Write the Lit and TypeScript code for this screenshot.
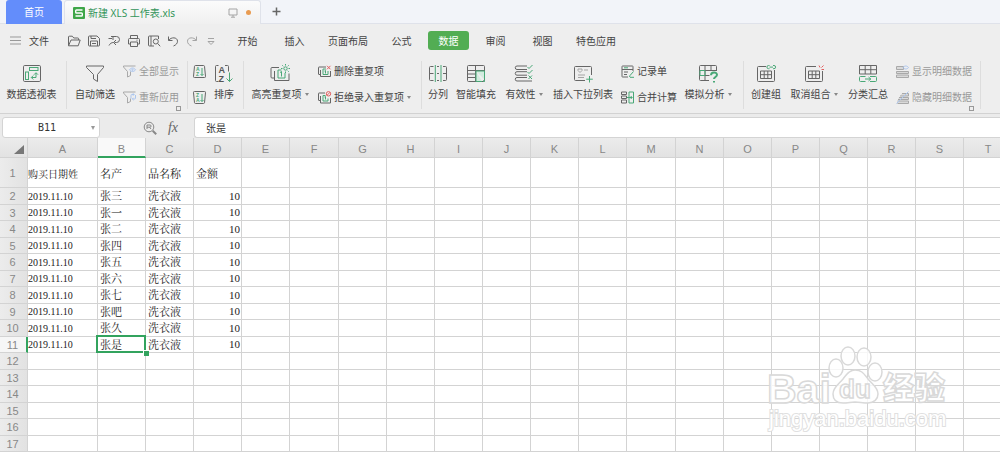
import { LitElement, html, svg, css, nothing, TemplateResult } from "lit";
import { customElement, state } from "lit/decorators.js";
import { classMap } from "lit/directives/class-map.js";

/* ---------- icons ---------- */

const big = (body: TemplateResult) => html`<svg class="big-icon" viewBox="0 0 22 20" aria-hidden="true">${body}</svg>`;
const small = (body: TemplateResult) => html`<svg class="small-icon" viewBox="0 0 13 13" aria-hidden="true">${body}</svg>`;
const quick = (body: TemplateResult) => html`<svg class="quick-icon" viewBox="0 0 14 14" aria-hidden="true">${body}</svg>`;

const icons = {
  pivot: big(svg`
    <rect x="2.5" y="2.5" width="17" height="16" rx="1.2"/>
    <g class="green"><rect x="8.5" y="4.5" width="8.5" height="3"/><rect x="4.5" y="9" width="3" height="7.5"/>
    <path d="M10.5 14.5h4.5v-4.5M12.3 12.5l-2 2 2 2M13 11.7l2-2 2 2"/></g>`),
  filter: big(svg`<path d="M2.5 3h17v1.5l-6 7v7l-4-2.5v-4.500l-7-7z"/>`),
  sort: big(svg`
    <path d="M5.500 2.500H3.500a1 1 0 0 0-1 1v14a1 1 0 0 0 1 1h2M12 2.500h2.500a1 1 0 0 1 1 1v5"/>
    <text class="glyph" x="5.500" y="10">A</text><text class="glyph" x="5.500" y="18.500">Z</text>
    <path class="green" d="M16.500 9.500v9M13.500 15.500l3 3 3-3"/>`),
  highlight: big(svg`
    <path d="M10 4.500H3a1 1 0 0 0-1 1v8.500a1 1 0 0 0 1 1h2.500M5.500 8v9.500h14.500v-7"/>
    <g class="green"><path d="M12.500 7H9v8h7v-5M11 9.500l1.500-1v5"/><circle cx="16.500" cy="5.500" r="1.700"/>
    <path d="M16.500 1v1.500M16.500 8.500v1.500M12 5.500h1.500M19.500 5.500H21M13.300 2.300l1 1M19.700 2.300l-1 1M19.700 8.700l-1-1"/></g>`),
  split: big(svg`
    <path d="M6.500 3.500h-3a1 1 0 0 0-1 1v12a1 1 0 0 0 1 1h3M10 3.500h2M10 17.500h2M16 3.500h2.500a1 1 0 0 1 1 1v12a1 1 0 0 1-1 1H16M2.500 10.500h4M10 10.500h2M16 10.500h3.500"/>
    <path class="green" d="M8.300 2v17M14 2v17"/>`),
  fill: big(svg`
    <rect x="2.500" y="2.500" width="17" height="16" rx="1"/><path d="M2.500 7.500h17M2.500 11h8M2.500 14.500h8M10.500 2.500v16"/>
    <path class="green tint" d="M11 8h8.500v8.500M11 8v10.500h6"/><circle class="green-dot" cx="19" cy="18" r="1"/>`),
  validate: big(svg`
    <path d="M14 3H4a1.500 1.500 0 0 0 0 3.500h10M14 8.700H4a1.500 1.500 0 0 0 0 3.500h10M14 14.500H4a1.500 1.500 0 0 0 0 3.500h15"/>
    <path class="green" d="M14.500 4l1.500 1.500 3.500-3.500M14.500 9l1.500 1.500 3.500-3.500M15.500 12.500l3.500 3.500M19 12.500l-3.500 3.500"/>`),
  dropdown: big(svg`
    <path d="M19.500 12V4.500a1 1 0 0 0-1-1h-15a1 1 0 0 0-1 1v12a1 1 0 0 0 1 1H13"/>
    <path class="light" d="M6 6h4v1.500l-2 2-2-2zM6 12h7M6 14.500h6M12 7h4"/>
    <path class="green" d="M17.500 13v6.500M14.200 16.200h6.600"/>`),
  whatif: big(svg`
    <path d="M19.500 8V3.500a1 1 0 0 0-1-1h-15a1 1 0 0 0-1 1v13a1 1 0 0 0 1 1H12M2.500 7.500h17M2.500 12.500h10M8 2.500v15M14 2.500v5"/>
    <path class="green" d="M3 7.500h5v5H3z"/>
    <path class="green thick" d="M14 12.200c0-3.600 6-3.600 6-.4 0 2.200-3 2.200-3 4.200M17 18v1.400"/>`),
  group: big(svg`
    <path d="M11 3.500H3.500a1 1 0 0 0-1 1v13a1 1 0 0 0 1 1h15a1 1 0 0 0 1-1V7"/>
    <path d="M5.500 8h11v7.500h-11zM5.500 11.700h11M9.200 8v7.500M12.800 8v7.500"/>
    <path class="green" d="M14.500 5.700h-1a1.600 1.600 0 0 1 0-3.200h1M18 2.500h1a1.600 1.600 0 0 1 0 3.200h-1M14.500 4.100h3.500"/>`),
  ungroup: big(svg`
    <path d="M13 3.500H3.500a1 1 0 0 0-1 1v13a1 1 0 0 0 1 1h15a1 1 0 0 0 1-1V8"/>
    <path d="M5.500 8h11v7.500h-11zM5.500 11.700h11M9.200 8v7.500M12.800 8v7.500"/>
    <path class="red" d="M16 2.500l1 2M20.500 2.500l-2 2M18.500 6.500h2.500"/>`),
  subtotal: big(svg`
    <path d="M2.500 2.500h17v8.500h-17zM2.500 6.700h17M8.200 2.500v8.500M13.800 2.500v8.500"/>
    <path class="green" d="M8.500 13.500h-5a1 1 0 0 0-1 1v3a1 1 0 0 0 1 1h5M13 13.500h5.500a1 1 0 0 1 1 1v3a1 1 0 0 1-1 1H13M8 16h6M11.500 14l2.200 2-2.200 2"/>`),
  showAll: small(svg`
    <path d="M.5 1h12M.5 1v1l4 4.500v5.500l3-1.500v-4"/><path class="blue" d="M6.500 4.800c1.700-2.400 4.500-2.400 6 0-1.500 2.300-4.300 2.300-6 0z"/><circle class="blue" cx="9.500" cy="4.800" r=".7"/>`),
  reapply: small(svg`
    <path d="M.5 1h12M.5 1v1l4 4.500v5.500l3-1.500v-3"/><path class="blue" d="M8 7.500V4.500a1 1 0 0 1 1-1h2M12.500 4v3a1 1 0 0 1-1 1H9.500M10 2.300l1.200 1.200L10 4.700M10.500 6.800L9.300 8l1.200 1.200"/>`),
  sortAsc: small(svg`
    <path d="M2.500.5h8a1 1 0 0 1 1 .8l1 10a1 1 0 0 1-1 1.200h-10a1 1 0 0 1-1-1.200l1-10a1 1 0 0 1 1-.8z"/>
    <text class="tiny" x="3" y="6">A</text><text class="tiny" x="3" y="11">Z</text><path class="green" d="M9 3v7.500M7.500 9L9 10.500 10.500 9"/>`),
  sortDesc: small(svg`
    <path d="M1.500.5h10a1 1 0 0 1 1 1.200l-1 10a1 1 0 0 1-1 .8h-8a1 1 0 0 1-1-.8l-1-10a1 1 0 0 1 1-1.200z"/>
    <text class="tiny" x="3" y="6">Z</text><text class="tiny" x="3" y="11">A</text><path class="green" d="M9 3v7.500M7.500 9L9 10.500 10.500 9"/>`),
  removeDup: small(svg`
    <path d="M8 2H1a.5.5 0 0 0-.5.500v6.500a.5.5 0 0 0 .5.500h1.500M2.500 5v6.500h10V6"/><path class="green" d="M8 4H5v5.500h5V6M6.500 6l1-.5v3"/>
    <path class="red" d="M9 .8l3.500 3.500M12.500.8L9 4.300"/>`),
  rejectDup: small(svg`
    <path d="M7 2H1a.5.5 0 0 0-.5.500v6.500a.5.5 0 0 0 .5.500h1.500M2.500 5v7h10V7"/><path class="green" d="M7.500 4.500H5V10h5V7.500M6.500 6l1-.5v3"/>
    <circle class="red" cx="10.500" cy="2.800" r="2.200"/><path class="red" d="M9 4.300l3-3"/>`),
  record: small(svg`
    <path d="M12 6V1.500a.5.5 0 0 0-.5-.500H1.500a.5.5 0 0 0-.5.500v10a.5.5 0 0 0 .5.500H7M1 4.500h11M3 7h4M3 9.500h3"/><path class="green" d="M3 2.800h4M12.500 6.500L9 10.500l-.5 1.500M9 12.300h4"/>`),
  consolidate: small(svg`
    <path d="M.5 1h5v2.500h-5zM.5 5h5v2.500h-5zM.5 9h5v3h-5z"/><path class="green" d="M8 1h4.500v11H8M8 1v11M6 6.500h5M9.700 5l1.500 1.500L9.700 8"/>`),
  showDetail: small(svg`
    <path class="soft" d="M.5 1.500h7v3h-7zM.5 6.500h12v2h-12zM.5 10h12v2.500h-12z"/><path class="blue" d="M7 2.500c1.500-2 4-2 5.500 0-1.500 2-4 2-5.500 0z"/>`),
  hideDetail: small(svg`
    <path class="soft" d="M6 2.500h6.500v2.500H4M3 6.500h9.500v2H2M1.500 10h11v2.500h-11"/><path class="blue" d="M.5 12.500l12-12"/>`),
};

const quickIcons: [string, TemplateResult][] = [
  ["打开", quick(svg`<path d="M1.500 11.500V3a.8.8 0 0 1 .8-.8h3l1.500 1.800h4a.8.8 0 0 1 .8.800v1.200M1.500 11.800L4 6h9.200l-2 5.800z"/>`)],
  ["保存", quick(svg`<path d="M1.500 3a1 1 0 0 1 1-1h7.500l2.500 2.500v6.500a1 1 0 0 1-1 1h-9a1 1 0 0 1-1-1zM3.500 12V7h7v5M4 2v2.500h5M5 9.500h4"/>`)],
  ["输出", quick(svg`<path d="M4 2.500h5.500a3 3 0 0 1 0 6h-2M1.500 4.500h3.500M9 6L6.500 8.500 9 11M6.500 8.500c-2 0-3.500 1-4.500 3M6 2.500v3.500"/>`)],
  ["打印", quick(svg`<path d="M3.500 4.500v-3h7v3M3 10H1.500V5.500a1 1 0 0 1 1-1h9a1 1 0 0 1 1 1V10H11M3.500 8h7v4.500h-7zM9.500 6.200h1"/>`)],
  ["打印预览", quick(svg`<path d="M11.500 5V2h-9a1 1 0 0 0-1 1v8a1 1 0 0 0 1 1H7M4 2v10"/><circle cx="8.800" cy="7.500" r="2.500"/><path d="M10.700 9.500l2.500 2.800"/>`)],
  ["撤销", quick(svg`<path d="M2.500 2.500v4h4M2.800 6.300C5 2.800 11.500 3 11.500 7.200c0 2.200-1.500 3.800-4 4.800"/>`)],
  ["重做", quick(svg`<path class="light" d="M11.500 2.500v4h-4M11.200 6.300C9 2.800 2.500 3 2.500 7.200c0 2.200 1.500 3.800 4 4.800"/>`)],
  ["更多", quick(svg`<path class="light" d="M4 4.500h6M4 7.500l3 3 3-3z"/>`)],
];

/* ---------- data ---------- */

type Icon = TemplateResult;
interface Tool { label: string; icon: Icon; size: string; menu?: boolean }
interface Stack { size: string; rows: { label: string; icon: Icon; menu?: boolean; bare?: boolean }[]; off?: boolean }
interface Group { items: (Tool | Stack)[]; launcher?: boolean }

const ribbon: Group[] = [
  { items: [{ label: "数据透视表", icon: icons.pivot, size: "w53" }] },
  { launcher: true, items: [
    { label: "自动筛选", icon: icons.filter, size: "w46" },
    { size: "pad5", off: true, rows: [{ label: "全部显示", icon: icons.showAll }, { label: "重新应用", icon: icons.reapply }] },
  ] },
  { items: [
    { size: "w20", rows: [{ label: "升序", icon: icons.sortAsc, bare: true }, { label: "降序", icon: icons.sortDesc, bare: true }] },
    { label: "排序", icon: icons.sort, size: "w22" },
  ] },
  { items: [
    { label: "高亮重复项", icon: icons.highlight, size: "w62", menu: true },
    { size: "w102", rows: [{ label: "删除重复项", icon: icons.removeDup }, { label: "拒绝录入重复项", icon: icons.rejectDup, menu: true }] },
  ] },
  { items: [
    { label: "分列", icon: icons.split, size: "w22" },
    { label: "智能填充", icon: icons.fill, size: "w54" },
    { label: "有效性", icon: icons.validate, size: "w42", menu: true },
    { label: "插入下拉列表", icon: icons.dropdown, size: "w76" },
    { size: "w60", rows: [{ label: "记录单", icon: icons.record }, { label: "合并计算", icon: icons.consolidate }] },
    { label: "模拟分析", icon: icons.whatif, size: "w54", menu: true },
  ] },
  { launcher: true, items: [
    { label: "创建组", icon: icons.group, size: "w34" },
    { label: "取消组合", icon: icons.ungroup, size: "w62", menu: true },
    { label: "分类汇总", icon: icons.subtotal, size: "w46" },
    { size: "pad5", off: true, rows: [{ label: "显示明细数据", icon: icons.showDetail }, { label: "隐藏明细数据", icon: icons.hideDetail }] },
  ] },
];

const menus = ["开始", "插入", "页面布局", "公式", "数据", "审阅", "视图", "特色应用"];
const columns = [..."ABCDEFGHIJKLMNOPQRST"];
const names = ["张三", "张一", "张二", "张四", "张五", "张六", "张七", "张吧", "张久", "张是"];
const cells: string[][] = [
  ["购买日期姓", "名产", "品名称", "金额"],
  ...names.map((n) => ["2019.11.10", n, "洗衣液", "10"]),
];
const ROWS = 17;

/* ---------- component ---------- */

@customElement("app-root")
export class AppRoot extends LitElement {
  @state() private row = 10;
  @state() private col = 1;

  static styles = css`
    :host { display: block; height: 100vh; overflow: hidden; position: relative; background: #fff; color: #444;
      font: 10px/14px "Noto Sans CJK SC", "Noto Sans", sans-serif; }
    *, *::before, *::after { box-sizing: border-box; }
    button { font: inherit; color: inherit; background: none; border: 0; padding: 0; margin: 0; white-space: nowrap; }
    svg { display: block; fill: none; stroke: #666; stroke-width: 1; flex: none; overflow: visible; }
    svg .green { stroke: #49a877; }
    svg .tint { fill: #d3ebdf; }
    svg .thick { stroke-width: 2; }
    svg .green-dot { fill: #49a877; stroke: none; }
    svg .red { stroke: #e26060; }
    svg .blue { stroke: #6b9fee; }
    svg .light { stroke: #a4a4a4; }
    svg .soft { fill: #c6c6c6; }
    svg .glyph, svg .tiny { fill: #555; stroke: none; font: bold 9px "Liberation Sans", sans-serif; }
    svg .tiny { fill: #49a877; font-size: 5px; }

    .tabs { display: flex; height: 24px; padding-left: 6px; background: #f2f4f9; border-bottom: 1px solid #dfe2ea; }
    .home { width: 56px; height: 24px; background: #638dfb; color: #fff; border-radius: 3px 3px 0 0; }
    .doc { display: flex; align-items: center; width: 197px; height: 24px; margin-left: 2px; padding: 0 9px 0 8px;
      background: linear-gradient(#fbfbfb, #f0f0f0); border: 1px solid #dfe2ea; border-bottom: 0; border-radius: 3px 3px 0 0; color: #33945a; }
    .logo { width: 12px; height: 12px; margin-right: 3px; }
    .doc .name { flex: 1; text-align: left; font-family: "Noto Sans", "Noto Sans CJK SC", sans-serif; }
    .screen { width: 10px; height: 10px; margin-right: 8px; }
    .dot { width: 5px; height: 5px; border-radius: 50%; background: #e99b50; }
    .add { width: 30px; display: grid; place-items: center; }
    .add svg { width: 9px; height: 9px; stroke-width: 1.5; }

    .menu { display: flex; align-items: center; height: 33px; padding-left: 10px; background: #eee; }
    .file { display: flex; align-items: center; gap: 8px; margin-right: 15px; }
    .file svg { width: 11px; height: 9px; stroke: #999; }
    .quick { display: grid; place-items: center; width: 20px; height: 20px; }
    .quick:nth-child(n + 6) { width: 19px; }
    .quick-icon { width: 14px; height: 14px; }
    .menus { display: flex; margin-left: 4px; }
    .item { width: 47px; display: grid; place-items: center; }
    .item.long { width: 60px; }
    .item button { width: 41px; height: 19px; border-radius: 3px; }
    .item.active button { background: #52ad53; color: #fff; }

    .ribbon { display: flex; height: 57px; padding: 4px 0; background: #eee; border-bottom: 1px solid #d2d2d2; }
    .group { display: flex; position: relative; flex: none; padding: 0 8px 0 5px; border-right: 1px solid #ddd; }
    .tool { display: flex; flex-direction: column; align-items: center; gap: 4px; padding-top: 2px; }
    .big-icon { width: 22px; height: 20px; }
    .small-icon { width: 13px; height: 13px; }
    .text { display: flex; align-items: center; gap: 3px; }
    .caret::after { content: ""; border: 2px solid transparent; border-top: 3px solid #888; border-bottom: 0; }
    .stack { display: flex; flex-direction: column; gap: 12px; padding-top: 3px; }
    .stack button { display: flex; align-items: center; gap: 3px; height: 14px; }
    .off { opacity: 0.5; }
    .launcher { position: absolute; right: 6px; bottom: -2px; width: 5px; height: 5px; border: 1px solid #999; }
    .w20 { width: 20px; } .w22 { width: 22px; } .w34 { width: 34px; } .w42 { width: 42px; } .w46 { width: 46px; }
    .w53 { width: 53px; } .w54 { width: 54px; } .w60 { width: 60px; } .w62 { width: 62px; } .w76 { width: 76px; }
    .w102 { width: 102px; padding-left: 7px; }
    .pad5 { padding-left: 5px; }

    .formula { display: flex; align-items: center; height: 24px; padding-top: 3px; padding-left: 2px; background: #ebebeb; }
    .namebox { display: flex; align-items: center; position: relative; width: 98px; height: 21px; padding-right: 4px; background: #fff;
      border: 1px solid #d4d4d4; border-radius: 3px; }
    input { border: 0; outline: 0; padding: 0; min-width: 0; background: none; color: #333; font: inherit; }
    .namebox input { flex: 1; width: 0; text-align: center; font-family: "DejaVu Sans Mono", monospace; }
    .namebox i { border: 2px solid transparent; border-top: 4px solid #999; border-bottom: 0; }
    .fx { display: flex; align-items: center; justify-content: flex-end; gap: 11px; width: 78px; margin-right: 16px; }
    .fx svg { width: 14px; height: 14px; stroke: #888; }
    .fx em { font: italic 14px/16px "Liberation Serif", serif; color: #666; }
    .content { flex: 1; height: 21px; padding: 0 11px; background: #fff; border: 1px solid #d4d4d4; border-right: 0; border-radius: 3px 0 0 3px; }

    table { table-layout: fixed; width: 1px; border-collapse: separate; border-spacing: 0; background: #fff; }
    .corner-col { width: 28px; }
    .first-col { width: 70px; }
    .data-col { width: 48px; }
    .data-col:nth-child(7n) { width: 49px; }
    th, td { padding: 0; border-right: 1px solid #d3d3d3; border-bottom: 1px solid #d3d3d3; white-space: nowrap; overflow: hidden; }
    th { font: 11px/14px "Liberation Sans", sans-serif; color: #888; text-align: center; background: #e7e7e7; }
    thead th { height: 20px; padding-top: 3px; background: linear-gradient(#ececec, #e2e2e2); }
    tbody th { background: linear-gradient(90deg, #ececec, #e2e2e2); padding-right: 2px; }
    thead .on { background: #f9f9f9; border-bottom: 2px solid #32a35e; }
    tbody .on { background: #f6f6f6; border-right: 2px solid #32a35e; padding-right: 1px; }
    .corner svg { width: 10px; height: 9px; margin-left: 14px; fill: #777; stroke: none; }
    tbody tr { height: 16px; }
    tbody tr:nth-child(even) { height: 17px; }
    tbody tr:first-child { height: 30px; }
    td { padding: 1px 0 0 2px; line-height: 13px; font-size: 11px; font-family: "Liberation Serif", "Noto Serif CJK SC", "Noto Sans CJK SC", serif; color: #222; }
    td:nth-child(2) { padding: 0; font-size: 10px; }
    tr:first-child td { padding-top: 4px; }
    .num { text-align: right; padding: 0 1px 0 0; }
    .sel { position: relative; overflow: visible; }
    .sel::before { content: ""; position: absolute; inset: -2px -1px -1px -2px; border: 2px solid #32a35e; }
    .sel::after { content: ""; position: absolute; right: -4px; bottom: -4px; width: 6px; height: 6px; background: #32a35e; border: solid #fff; border-width: 1px 0 0 1px; }

    .watermark { position: absolute; right: 48px; bottom: 16px; width: 184px; height: 92px; pointer-events: none; }
    .watermark * { fill: #fff; fill-opacity: 0.8; stroke: #d9d9d9; stroke-width: 1.5px; }
    .watermark .brand { font: bold 41px "Liberation Sans", sans-serif; }
    .watermark .du { font: bold 26px "Liberation Sans", sans-serif; }
    .watermark .han { font: 900 31px "Noto Sans CJK SC", sans-serif; }
    .watermark .url { font: 22px "Liberation Sans", sans-serif; stroke: #e0e0e0; stroke-width: 2px; paint-order: stroke; fill-opacity: 1; }
  `;

  private renderItem(item: Tool | Stack) {
    if ("rows" in item) {
      return html`<div class="stack ${item.size} ${item.off ? "off" : ""}">
        ${item.rows.map((r) => html`<button ?disabled=${item.off} aria-label=${r.label}>
          ${r.icon}${r.bare ? nothing : html`<span class=${classMap({ text: true, caret: !!r.menu })}>${r.label}</span>`}
        </button>`)}
      </div>`;
    }
    return html`<button class="tool ${item.size}">
      ${item.icon}<span class=${classMap({ text: true, caret: !!item.menu })}>${item.label}</span>
    </button>`;
  }

  render() {
    const value = cells[this.row]?.[this.col] ?? "";
    return html`
      <nav class="tabs">
        <button class="home">首页</button>
        <button class="doc">
          <svg class="logo" viewBox="0 0 12 12"><rect width="12" height="12" rx="1" fill="#3fa648" stroke="none"/>
            <path d="M9.500 3H3.500a.8.8 0 0 0-.8.8v1.400a.8.8 0 0 0 .8.800h5a.8.8 0 0 1 .8.800v1.400a.8.8 0 0 1-.8.800H2.500" stroke="#fff" stroke-width="1.400"/></svg>
          <span class="name">新建 XLS 工作表.xls</span>
          <svg class="screen" viewBox="0 0 10 10"><path class="light" d="M1 1h8v6H1zM5 7v2M3 9.200h4"/></svg>
          <span class="dot"></span>
        </button>
        <button class="add" aria-label="新建标签"><svg viewBox="0 0 9 9"><path d="M4.500 .5v8M.5 4.500h8"/></svg></button>
      </nav>

      <div class="menu">
        <button class="file"><svg viewBox="0 0 11 9"><path d="M0 1h11M0 4.500h11M0 8h11"/></svg>文件</button>
        ${quickIcons.map(([label, icon]) => html`<button class="quick" aria-label=${label}>${icon}</button>`)}
        <div class="menus">
          ${menus.map((m) => html`<div class=${classMap({ item: true, long: m.length > 2, active: m === "数据" })}><button>${m}</button></div>`)}
        </div>
      </div>

      <div class="ribbon">
        ${ribbon.map((g) => html`<div class="group">
          ${g.items.map((i) => this.renderItem(i))}
          ${g.launcher ? html`<button class="launcher" aria-label="更多选项"></button>` : nothing}
        </div>`)}
      </div>

      <div class="formula">
        <div class="namebox"><input aria-label="名称框" .value=${columns[this.col] + (this.row + 1)} /><i></i></div>
        <div class="fx">
          <svg viewBox="0 0 14 14"><circle cx="6" cy="6" r="4.800"/><path d="M4 8V4h3a1 1 0 0 1 0 2.200H4M6.500 6.200L8 8"/><path d="M9.700 9.700l3.500 3.500" stroke-width="2"/></svg>
          <em>fx</em>
        </div>
        <input class="content" aria-label="编辑栏" .value=${value} />
      </div>

      <table>
        <colgroup>
          <col class="corner-col" /><col class="first-col" />
          ${columns.slice(1).map(() => html`<col class="data-col" />`)}
        </colgroup>
        <thead>
          <tr>
            <th class="corner"><svg viewBox="0 0 10 9"><path d="M10 0v9H0z"/></svg></th>
            ${columns.map((c, i) => html`<th class=${i === this.col ? "on" : ""}>${c}</th>`)}
          </tr>
        </thead>
        <tbody>
          ${Array.from({ length: ROWS }, (_, r) => html`<tr>
            <th class=${r === this.row ? "on" : ""}>${r + 1}</th>
            ${columns.map((_c, c) => html`<td
              class=${classMap({ num: c === 3 && r > 0, sel: r === this.row && c === this.col })}
              @click=${() => { this.row = r; this.col = c; }}>${cells[r]?.[c] ?? ""}</td>`)}
          </tr>`)}
        </tbody>
      </table>

      <svg class="watermark" viewBox="0 0 184 92">
        <text class="brand" x="-1" y="58">Bai</text>
        <ellipse cx="68" cy="23" rx="7" ry="9"/><ellipse cx="80" cy="11" rx="7" ry="9"/>
        <ellipse cx="96" cy="12" rx="7" ry="9"/><ellipse cx="107" cy="27" rx="7" ry="9"/>
        <path d="M87 25c-6 0-9 5-12 9-4 5-10 8-10 15 0 6 4 9 10 9 5 0 8-1 12-1s8 1 13 1c6 0 10-4 10-9 0-7-6-10-10-15-4-5-6-9-13-9z"/>
        <text class="du" x="71" y="53">du</text>
        <text class="han" x="115" y="54">经验</text>
        <text class="url" x="1" y="81">jingyan.baidu.com</text>
      </svg>
    `;
  }
}
